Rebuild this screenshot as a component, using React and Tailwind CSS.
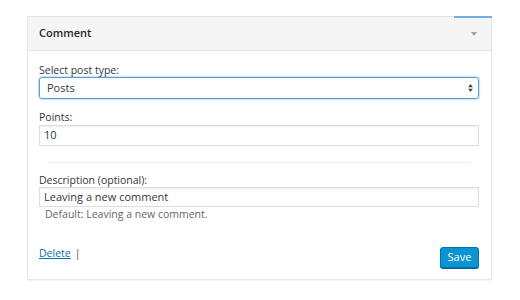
const SortArrows = ({ className }) => (
  <svg className={className} viewBox="0 0 6 10" fill="currentColor">
    <path d="M3 0 L6 4 H0 Z" />
    <path d="M0 6 H6 L3 10 Z" />
  </svg>
);

const App = () => {
  return (
    <div className="min-h-[300px] w-[520px] bg-white pt-[16px] pl-[27px] font-['Open_Sans',sans-serif] text-[#32373c]">
      <div className="relative w-[465px] border border-[#e5e5e5] bg-white shadow-[0_1px_1px_rgba(0,0,0,0.04)]">
        {/* blue strip over top edge */}
        <div className="absolute -top-px right-[-1px] h-[2px] w-[38px] bg-[#72aee6]" />

        {/* Header */}
        <div className="flex h-[34px] items-center justify-between border-b border-[#e5e5e5] bg-[#f5f5f5] pl-[11px] pr-[14px]">
          <span className="text-[11px] font-semibold text-[#23282d]">Comment</span>
          <span className="h-0 w-0 border-x-[3px] border-t-[4px] border-x-transparent border-t-[#a0a5aa]" />
        </div>

        {/* Body */}
        <div className="pl-[11px] pr-[12px] pt-[12px] pb-[11px]">
          <div className="text-[10.5px] leading-[14px]">Select post type:</div>
          <div className="flex h-[22px] items-center justify-between rounded-[3px] border border-[#5b9dd9] pl-[7px] pr-[5px] shadow-[0_0_2px_rgba(30,140,190,0.8)]">
            <span className="text-[11px]">Posts</span>
            <SortArrows className="h-[8px] w-[5px] text-[#444]" />
          </div>

          <div className="mt-[11px] text-[10.5px] leading-[14px]">Points:</div>
          <div className="mt-px flex h-[21px] items-center border border-[#ddd] pl-[4px] shadow-[inset_0_1px_2px_rgba(0,0,0,0.07)]">
            <span className="text-[11px]">10</span>
          </div>

          <div className="mx-[8px] mt-[16px] h-px bg-[#eee]" />

          <div className="mt-[10px] text-[10.5px] leading-[14px]">Description (optional):</div>
          <div className="flex h-[20px] items-center border border-[#ddd] pl-[4px] shadow-[inset_0_1px_2px_rgba(0,0,0,0.07)]">
            <span className="text-[11px]">Leaving a new comment</span>
          </div>
          <div className="pl-[6px] text-[10.5px] leading-[14px] text-[#666]">Default: Leaving a new comment.</div>

          <div className="mt-[26px] flex items-start justify-between">
            <div className="-mt-px text-[10.5px] leading-[14px]">
              <a href="#" className="text-[#0073aa] underline">Delete</a>
              <span className="ml-[4px] text-[#555]">|</span>
            </div>
            <button className="h-[21px] w-[39px] rounded-[3px] border border-[#0073aa] bg-[#0b94d1] text-[11px] text-white shadow-[0_1px_0_#006799]">
              Save
            </button>
          </div>
        </div>
      </div>
    </div>
  );
};

export default App;
